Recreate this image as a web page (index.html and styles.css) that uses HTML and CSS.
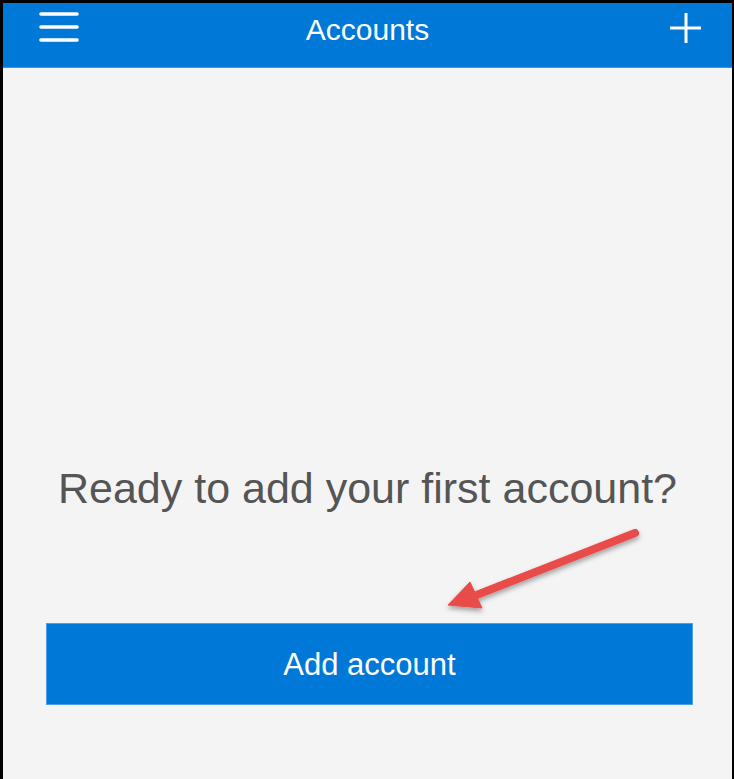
FILE: index.html
```html
<!DOCTYPE html>
<html>
<head>
<meta charset="utf-8">
<link rel="stylesheet" href="styles.css">
</head>
<body>
<div class="screen">
  <header class="topbar">
    <div class="left">
      <svg class="menu" width="42" height="34" viewBox="0 0 42 34">
        <g stroke="#fff" stroke-width="3.6" stroke-linecap="round">
          <line x1="3" y1="4" x2="39" y2="4"/>
          <line x1="3" y1="17" x2="39" y2="17"/>
          <line x1="3" y1="30" x2="39" y2="30"/>
        </g>
      </svg>
    </div>
    <h1 class="title">Accounts</h1>
    <div class="right">
      <svg class="plus" width="36" height="34" viewBox="0 0 36 34">
        <g stroke="#fff" stroke-width="3">
          <line x1="2" y1="17" x2="33" y2="17"/>
          <line x1="18" y1="2" x2="18" y2="32"/>
        </g>
      </svg>
    </div>
  </header>
  <main class="content">
    <p class="prompt">Ready to add your first account?</p>
    <button class="add-btn">Add account</button>
  </main>
  <svg class="arrow" width="220" height="110" viewBox="0 0 220 110">
    <defs>
      <filter id="sh" x="-20%" y="-20%" width="140%" height="160%">
        <feDropShadow dx="0" dy="3" stdDeviation="2.5" flood-color="#000" flood-opacity="0.35"/>
      </filter>
    </defs>
    <g filter="url(#sh)" fill="#e84c4a" stroke="#e84c4a">
      <line x1="205" y1="18" x2="44" y2="81" stroke-width="8" stroke-linecap="round"/>
      <polygon points="18,90 40,67 52,93" stroke-width="1" stroke-linejoin="round"/>
    </g>
  </svg>
</div>
</body>
</html>
```
FILE: styles.css
```css
html, body {
  margin: 0;
  padding: 0;
  background: #000;
}
.screen {
  position: relative;
  margin: 3px 2px 0 3px;
  height: 776px;
  background: #f4f4f4;
  overflow: hidden;
  font-family: "Liberation Sans", Arial, sans-serif;
}
.topbar {
  display: grid;
  grid-template-columns: 1fr auto 1fr;
  height: 64px;
  background: #0078d7;
  border-bottom: 1px solid #3c94df;
}
.left {
  padding-left: 35px;
  padding-top: 7px;
}
.menu, .plus {
  display: block;
}
.right {
  display: flex;
  justify-content: flex-end;
  padding-right: 28px;
  padding-top: 8px;
}
.title {
  margin: 10px 0 0 0;
  font-size: 30px;
  line-height: 34px;
  font-weight: normal;
  color: #fff;
}
.content {
  display: flex;
  flex-direction: column;
  align-items: center;
  padding-top: 396px;
}
.prompt {
  margin: 0;
  font-size: 43px;
  line-height: 48px;
  color: #555;
}
.add-btn {
  margin: 111px 39px 0 43px;
  align-self: stretch;
  height: 82px;
  background: #0078d7;
  border: 1px solid #4a9fe5;
  color: #fff;
  font-family: "Liberation Sans", Arial, sans-serif;
  font-size: 31px;
  padding: 2px 0 0 0;
}
.arrow {
  position: absolute;
  left: 427px;
  top: 512px;
}
```
